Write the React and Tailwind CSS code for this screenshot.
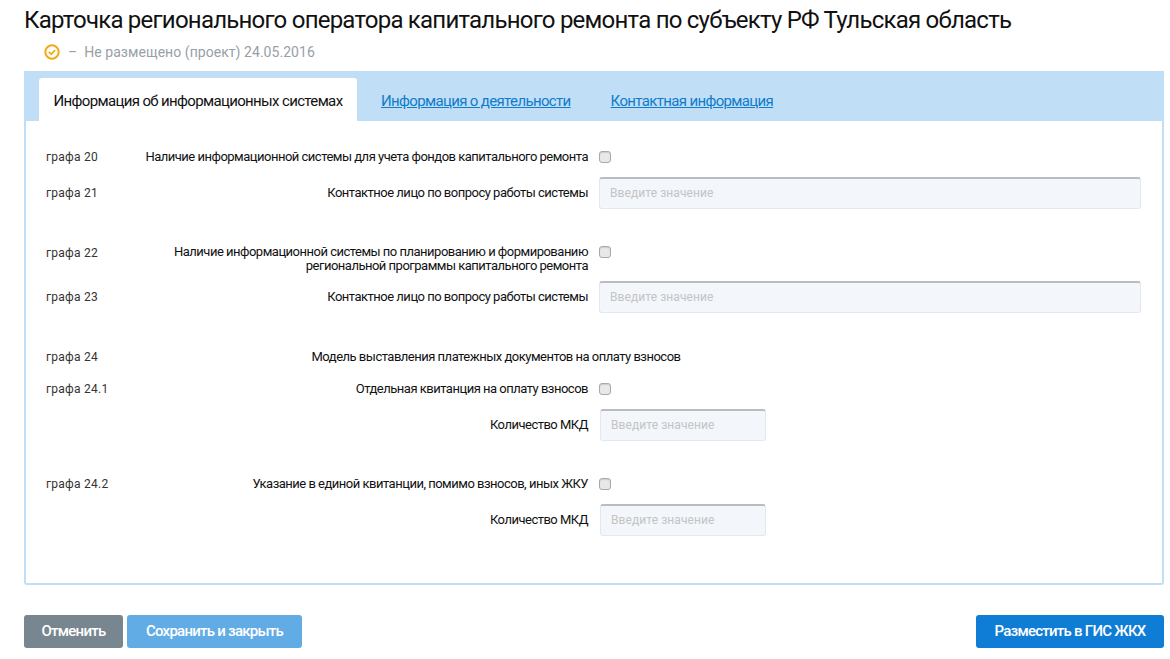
const fontStack = "font-['Roboto',sans-serif]";

function Check() {
  return (
    <span className="block w-[12px] h-[12px] rounded-[3px] border border-[#a9a9a9] bg-[#e8e8e8] shadow-[inset_0_1px_1px_rgba(0,0,0,0.12)]" />
  );
}

function Field({ small }) {
  return (
    <div
      className={
        small
          ? "ml-px w-[166px] h-[32px] rounded-[3px] border border-[#e3e8ee] border-t-2 border-t-[#b9bcc0] bg-[#f3f6fb] flex items-center pl-[10px] pb-[2px] text-[12px] text-[#c4c4c4] tracking-[0.08px]"
          : "w-[542px] h-[32px] rounded-[3px] border border-[#e3e8ee] border-t-2 border-t-[#b9bcc0] bg-[#f3f6fb] flex items-center pl-[10px] pb-[2px] text-[12px] text-[#c4c4c4] tracking-[0.08px]"
      }
    >
      Введите значение
    </div>
  );
}

function Row({ graph, label, children, className, alignTop }) {
  return (
    <div className={"flex " + (alignTop ? "items-start " : "items-center ") + (className || "")}>
      <div className="w-[70px] shrink-0 text-[12px] text-[#333] tracking-[0.25px]">{graph}</div>
      <div className="w-[472px] shrink-0 text-right text-[13px] leading-[14px] text-[#111] tracking-[-0.5px]">{label}</div>
      <div className="ml-[11px] shrink-0">{children}</div>
    </div>
  );
}

export default function App() {
  return (
    <div className={"w-[1170px] h-[659px] overflow-hidden bg-white " + fontStack}>
      <div className="pl-[24px] pr-[6px]">
        <h1 className="pt-[6px] h-[36px] text-[24px] leading-[28px] font-normal text-[#111] tracking-[-0.77px] whitespace-nowrap">
          Карточка регионального оператора капитального ремонта по субъекту РФ Тульская область
        </h1>
        <div className="h-[36px] pl-[20px] pb-[4px] flex items-center text-[14px] text-[#97a0a8] tracking-[0.05px]">
          <svg width="16" height="16" viewBox="0 0 16 16" fill="none">
            <circle cx="8" cy="8" r="6.7" stroke="#f0ab14" strokeWidth="2" />
            <path d="M4.8 7.8l2.4 2.4L11.2 6" stroke="#f0ab14" strokeWidth="1.7" />
          </svg>
          <span className="ml-[8px]">–</span>
          <span className="ml-[7px]">Не размещено (проект) 24.05.2016</span>
        </div>
        <div className="mt-[-1px] h-[514px] rounded-b-[3px] border-2 border-t-0 border-[#c0def5]">
          <div className="h-[50px] -mx-[2px] bg-[#c0def5] flex items-end pl-[15px] text-[15px] tracking-[-0.65px]">
            <div className="w-[318px] h-[43px] bg-white rounded-t-[3px] flex items-center justify-center text-[#111] pt-[3px]">
              Информация об информационных системах
            </div>
            <a className="ml-[24px] h-[43px] flex items-center pt-[3px] text-[#0f7ccc] underline">Информация о деятельности</a>
            <a className="ml-[40px] h-[43px] flex items-center pt-[3px] text-[#0f7ccc] underline">Контактная информация</a>
          </div>
          <div className="pl-[20px] pt-[29px]">
            <Row graph="графа 20" label="Наличие информационной системы для учета фондов капитального ремонта" className="h-[14px]">
              <Check />
            </Row>
            <Row graph="графа 21" label="Контактное лицо по вопросу работы системы" className="mt-[13px]">
              <Field />
            </Row>
            <Row
              graph={<span className="block mt-[-1px]">графа 22</span>}
              label={<>Наличие информационной системы по планированию и формированию<br />региональной программы капитального ремонта</>}
              className="mt-[36px]"
              alignTop
            >
              <div className="mt-[1px]"><Check /></div>
            </Row>
            <Row graph="графа 23" label="Контактное лицо по вопросу работы системы" className="mt-[8px]">
              <Field />
            </Row>
            <div className="flex items-center mt-[37px] h-[14px]">
              <div className="w-[70px] shrink-0 text-[12px] text-[#333] tracking-[0.25px]">графа 24</div>
              <div className="w-[636px] shrink-0 text-center text-[13px] text-[#111] tracking-[-0.5px] pl-[124px] whitespace-nowrap">Модель выставления платежных документов на оплату взносов</div>
            </div>
            <Row graph="графа 24.1" label="Отдельная квитанция на оплату взносов" className="mt-[18px] h-[14px]">
              <Check />
            </Row>
            <Row label="Количество МКД" className="mt-[13px]">
              <Field small />
            </Row>
            <Row graph="графа 24.2" label="Указание в единой квитанции, помимо взносов, иных ЖКУ" className="mt-[36px] h-[14px]">
              <Check />
            </Row>
            <Row label="Количество МКД" className="mt-[13px]">
              <Field small />
            </Row>
          </div>
        </div>
        <div className="mt-[30px] flex text-[15px] font-medium text-white tracking-[-0.75px]">
          <button className="w-[99px] h-[33px] rounded-[3px] bg-[#78868f]">Отменить</button>
          <button className="ml-[4px] w-[175px] h-[33px] rounded-[3px] bg-[#62ace6]">Сохранить и закрыть</button>
          <button className="ml-auto w-[188px] h-[33px] rounded-[3px] bg-[#0f7dd6]">Разместить в ГИС ЖКХ</button>
        </div>
      </div>
    </div>
  );
}
